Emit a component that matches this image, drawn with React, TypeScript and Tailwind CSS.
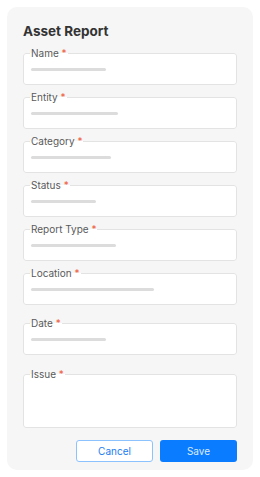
import type { ReactNode } from 'react'

function Field({ label, bar, className, children }: { label: string; bar?: string; className?: string; children?: ReactNode }) {
  return (
    <fieldset className={`rounded-[3px] border border-[#e3e3e3] bg-white pl-[7px] pr-2 ${className ?? ''}`}>
      <legend className="-ml-px px-px text-[10px] leading-[12px] text-[#5a5a5a]">
        {label} <span className="text-[#ef5a3c]">*</span>
      </legend>
      {bar ? <div className={`mt-[9px] h-[3px] rounded-full bg-[#dcdcdc] ${bar}`} /> : null}
      {children}
    </fieldset>
  )
}

export default function App() {
  return (
    <div className="h-[477px] w-[260px] bg-white p-[7px]" style={{ fontFamily: 'Inter, "Open Sans", sans-serif' }}>
      <div className="flex h-[463px] flex-col rounded-[10px] bg-[#f6f6f6] px-4 pt-[16px]">
        <h1 className="text-[13.5px] font-bold leading-[16px] text-[#333]">Asset Report</h1>
        <div className="mt-[8px] flex flex-col">
          <Field label="Name" bar="w-[75px]" className="h-[38px]" />
          <Field label="Entity" bar="w-[87px]" className="mt-[6px] h-[38px]" />
          <Field label="Category" bar="w-[80px]" className="mt-[6px] h-[38px]" />
          <Field label="Status" bar="w-[65px]" className="mt-[6px] h-[38px]" />
          <Field label="Report Type" bar="w-[85px]" className="mt-[6px] h-[38px]" />
          <Field label="Location" bar="w-[123px]" className="mt-[6px] h-[38px]" />
          <Field label="Date" bar="w-[75px]" className="mt-[12px] h-[38px]" />
          <Field label="Issue" className="mt-[13px] h-[60px]" />
        </div>
        <div className="mt-[12px] flex justify-end gap-[7px]">
          <button className="h-[22px] w-[77px] rounded-[3px] border border-[#8cc3ff] bg-white text-[10px] text-[#1a7cf0]">Cancel</button>
          <button className="h-[22px] w-[77px] rounded-[3px] bg-[#0a7cff] text-[10px] text-[#dbeaff]">Save</button>
        </div>
      </div>
    </div>
  )
}
